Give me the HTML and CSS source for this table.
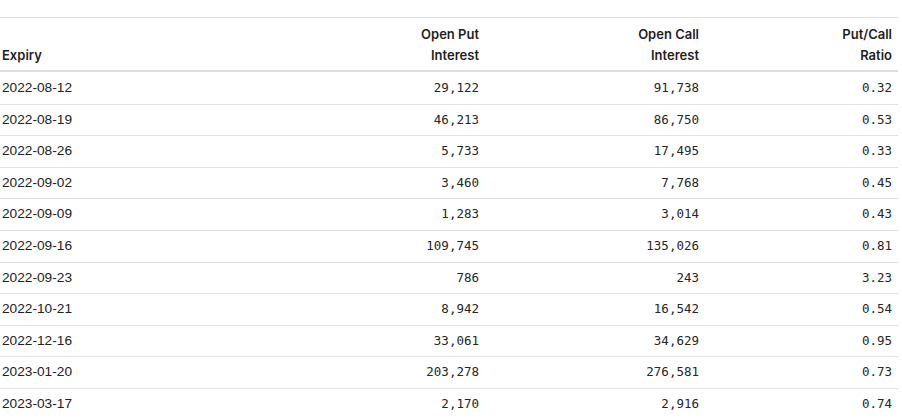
FILE: index.html
```html
<!DOCTYPE html>
<html>
<head>
<meta charset="utf-8">
<link rel="stylesheet" href="styles.css">
</head>
<body>
<table class="oi">
  <colgroup>
    <col class="c1"><col class="c2"><col class="c3"><col class="c4">
  </colgroup>
  <thead>
    <tr>
      <th class="left">Expiry</th>
      <th>Open Put<br>Interest</th>
      <th>Open Call<br>Interest</th>
      <th>Put/Call<br>Ratio</th>
    </tr>
  </thead>
  <tbody>
    <tr><td class="date">2022-08-12</td><td>29,122</td><td>91,738</td><td>0.32</td></tr>
    <tr><td class="date">2022-08-19</td><td>46,213</td><td>86,750</td><td>0.53</td></tr>
    <tr><td class="date">2022-08-26</td><td>5,733</td><td>17,495</td><td>0.33</td></tr>
    <tr><td class="date">2022-09-02</td><td>3,460</td><td>7,768</td><td>0.45</td></tr>
    <tr><td class="date">2022-09-09</td><td>1,283</td><td>3,014</td><td>0.43</td></tr>
    <tr><td class="date">2022-09-16</td><td>109,745</td><td>135,026</td><td>0.81</td></tr>
    <tr><td class="date">2022-09-23</td><td>786</td><td>243</td><td>3.23</td></tr>
    <tr><td class="date">2022-10-21</td><td>8,942</td><td>16,542</td><td>0.54</td></tr>
    <tr><td class="date">2022-12-16</td><td>33,061</td><td>34,629</td><td>0.95</td></tr>
    <tr><td class="date">2023-01-20</td><td>203,278</td><td>276,581</td><td>0.73</td></tr>
    <tr><td class="date">2023-03-17</td><td>2,170</td><td>2,916</td><td>0.74</td></tr>
  </tbody>
</table>
</body>
</html>
```
FILE: styles.css
```css
html, body {
  margin: 0;
  padding: 0;
  background: #ffffff;
}
body {
  padding-top: 17px;
  font-family: Inter, "Liberation Sans", sans-serif;
  color: #222222;
}
.oi {
  border-collapse: collapse;
  width: 898px;
  table-layout: fixed;
}
.c1 { width: 265px; }
.c2 { width: 220px; }
.c3 { width: 220px; }
.c4 { width: 193px; }
.oi thead tr {
  border-top: 1px solid #e2e2e2;
  border-bottom: 2px solid #dcdee2;
}
.oi th {
  font-size: 13px;
  font-weight: 600;
  line-height: 21px;
  text-align: right;
  vertical-align: bottom;
  padding: 6px 6px 4px 2px;
  color: #1f1f1f;
}
.oi th.left {
  text-align: left;
}
.oi tbody tr {
  border-bottom: 1px solid #e2e2e2;
}
.oi td {
  font-family: "DejaVu Sans Mono", monospace;
  font-size: 12.5px;
  line-height: 18.6px;
  padding: 6px 6px 6px 2px;
  text-align: right;
  color: #262626;
}
.oi td.date {
  font-family: "Liberation Sans", Arial, sans-serif;
  font-size: 13.7px;
  text-align: left;
  color: #222222;
}
.oi tbody tr:first-child td {
  padding-top: 7px;
}
```
